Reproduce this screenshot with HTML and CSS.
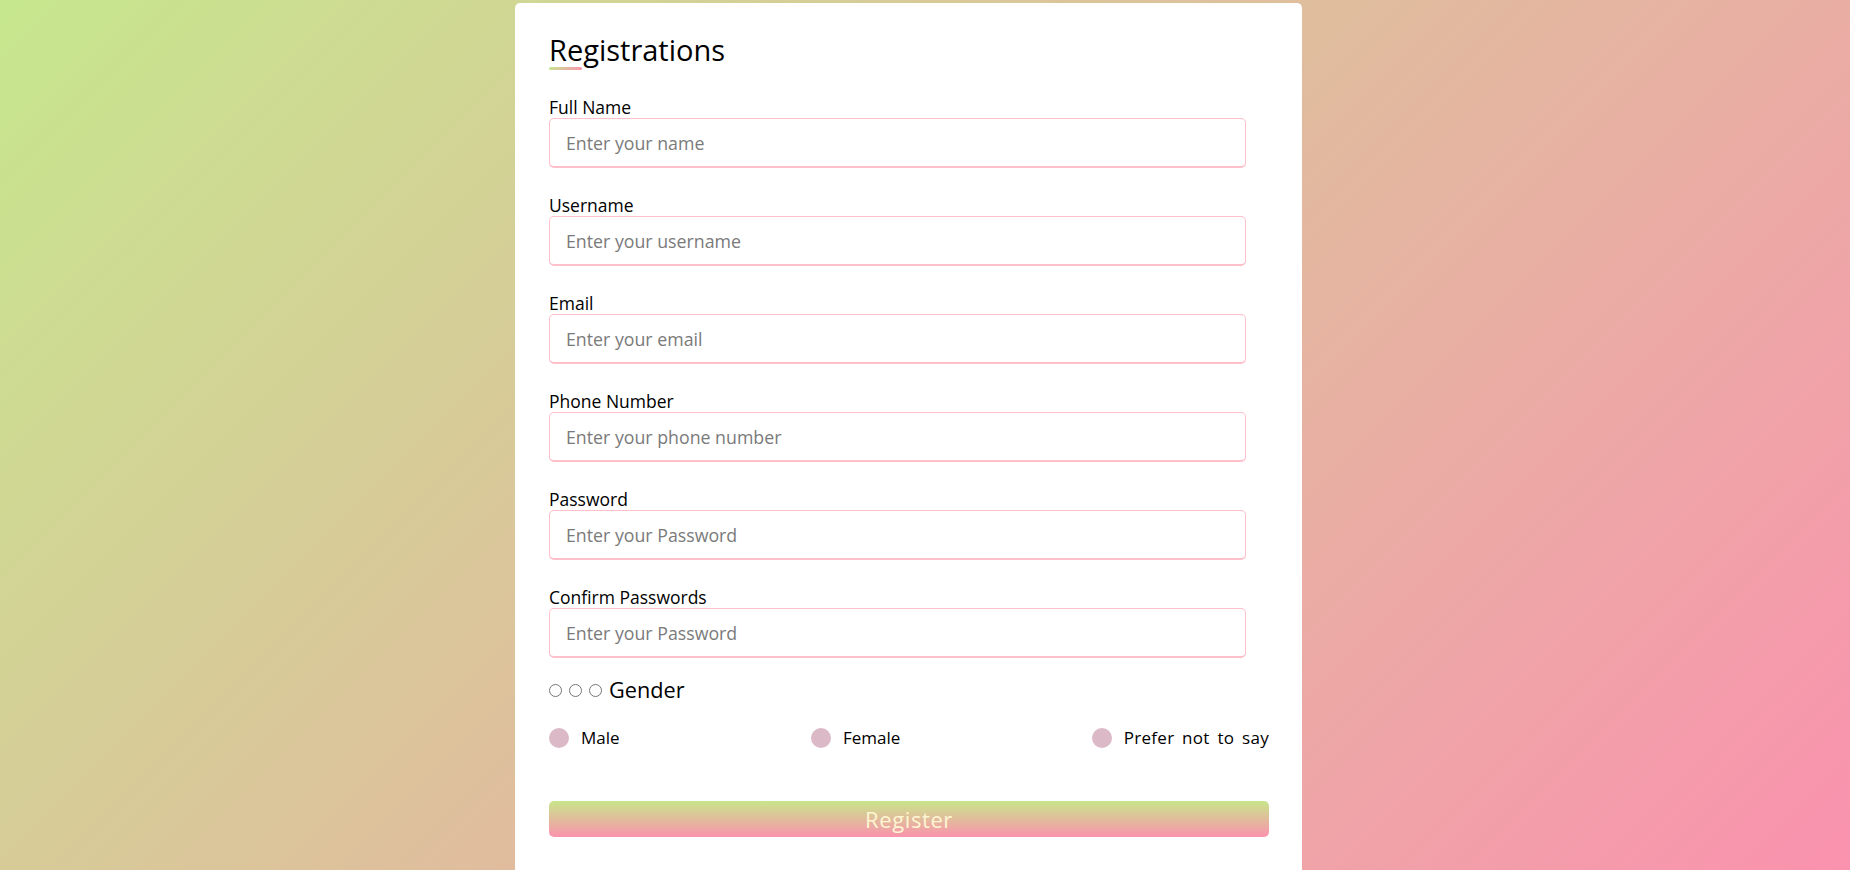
FILE: index.html
```html
<!DOCTYPE html>
<html lang="en">
<head>
<meta charset="utf-8">
<title>Registration</title>
<link rel="stylesheet" href="styles.css">
</head>
<body>
<div class="container">
  <div class="title">Registrations</div>
  <form class="form">
    <div class="fields">
      <div class="field">
        <label class="label">Full Name</label>
        <input class="input" type="text" placeholder="Enter your name">
      </div>
      <div class="field">
        <label class="label">Username</label>
        <input class="input" type="text" placeholder="Enter your username">
      </div>
      <div class="field">
        <label class="label">Email</label>
        <input class="input" type="text" placeholder="Enter your email">
      </div>
      <div class="field">
        <label class="label">Phone Number</label>
        <input class="input" type="text" placeholder="Enter your phone number">
      </div>
      <div class="field">
        <label class="label">Password</label>
        <input class="input" type="text" placeholder="Enter your Password">
      </div>
      <div class="field">
        <label class="label">Confirm Passwords</label>
        <input class="input" type="text" placeholder="Enter your Password">
      </div>
    </div>
    <div class="gender">
      <div class="gender-head">
        <input class="radio" type="radio" name="gender" id="dot-1">
        <input class="radio" type="radio" name="gender" id="dot-2">
        <input class="radio" type="radio" name="gender" id="dot-3">
        <span class="gender-title">Gender</span>
      </div>
      <div class="options">
        <label class="option" for="dot-1"><span class="dot"></span><span>Male</span></label>
        <label class="option" for="dot-2"><span class="dot"></span><span>Female</span></label>
        <label class="option" for="dot-3"><span class="dot"></span><span class="wide">Prefer not to say</span></label>
      </div>
    </div>
    <button class="button" type="button">Register</button>
  </form>
</div>
</body>
</html>
```

FILE: styles.css
```css
html {
  height: 100%;
  overflow: hidden;
}

body {
  margin: 0;
  height: 100%;
  box-sizing: border-box;
  padding: 3px 33px 0 0;
  display: flex;
  justify-content: center;
  align-items: flex-start;
  font-family: "Comic Sans MS", "Open Sans", sans-serif;
  color: #000;
  background: linear-gradient(135deg, #c6e78d 0%, #fa92ae 100%);
}

.container {
  flex: none;
  width: 787px;
  box-sizing: border-box;
  padding: 30px 33px 40px 34px;
  background: #fff;
  border-radius: 5px;
}

.title {
  font-size: 29px;
  line-height: 34px;
  font-weight: 400;
}

.title::after {
  content: "";
  display: block;
  width: 33px;
  height: 3px;
  border-radius: 2px;
  background: linear-gradient(135deg, #c6e78d, #fa92ae);
}

.form {
  margin-top: 27px;
}

.fields {
  display: flex;
  flex-direction: column;
  gap: 27px;
}

.label {
  display: block;
  font-size: 17.5px;
  line-height: 20px;
}

.input {
  display: block;
  width: calc(100% - 23px);
  height: 50px;
  box-sizing: border-box;
  margin: 1px 0 0;
  padding: 0 16px;
  border: 1px solid #ffc0cb;
  border-bottom-width: 2px;
  border-radius: 5px;
  font-family: inherit;
  font-size: 17.75px;
  color: #000;
  outline: none;
}

.input::placeholder {
  color: #7a7a7a;
}

.gender {
  margin-top: 20px;
}

.gender-head {
  display: flex;
  align-items: center;
  font-size: 21.7px;
  line-height: 24px;
}

.radio {
  appearance: none;
  -webkit-appearance: none;
  width: 13px;
  height: 13px;
  margin: 0 7px 0 0;
  box-sizing: border-box;
  border: 1px solid #767676;
  border-radius: 50%;
  background: #fff;
}

.options {
  display: flex;
  justify-content: space-between;
  margin-top: 24px;
  font-size: 17px;
  line-height: 24px;
}

.option {
  display: flex;
  align-items: center;
  gap: 12px;
}

.wide {
  word-spacing: 3px;
  letter-spacing: 0.3px;
}

.dot {
  width: 20px;
  height: 20px;
  border-radius: 50%;
  background: #dbb9c6;
}

.button {
  display: block;
  width: 100%;
  height: 36px;
  margin-top: 51px;
  padding: 0;
  border: 0;
  border-radius: 5px;
  background: linear-gradient(to bottom, #c8e68b, #fa92ad);
  color: #fdf6d2;
  font-family: inherit;
  font-size: 22px;
  letter-spacing: 0.6px;
}
```
